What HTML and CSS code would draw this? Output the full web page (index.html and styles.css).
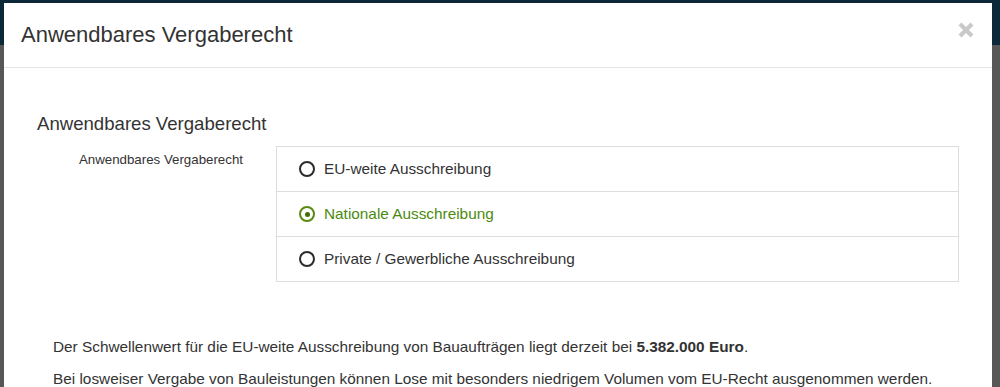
FILE: index.html
```html
<!DOCTYPE html>
<html lang="de">
<head>
<meta charset="utf-8">
<title>Anwendbares Vergaberecht</title>
<link rel="stylesheet" href="styles.css">
</head>
<body>
<div class="modal">
  <div class="modal-header">
    <h4 class="modal-title">Anwendbares Vergaberecht</h4>
    <button class="close" type="button" aria-label="Schließen">
      <svg width="16" height="16" viewBox="0 0 16 16"><path d="M2 2 L14 14 M14 2 L2 14" stroke="#c9c9c9" stroke-width="4.2" stroke-linecap="butt"/></svg>
    </button>
  </div>
  <div class="modal-body">
    <h3 class="section-title">Anwendbares Vergaberecht</h3>
    <div class="form-row">
      <label class="control-label">Anwendbares Vergaberecht</label>
      <ul class="radio-list">
        <li class="radio-item"><span class="radio"></span><span>EU-weite Ausschreibung</span></li>
        <li class="radio-item checked"><span class="radio"></span><span>Nationale Ausschreibung</span></li>
        <li class="radio-item"><span class="radio"></span><span>Private / Gewerbliche Ausschreibung</span></li>
      </ul>
    </div>
    <div class="info">
      <p>Der Schwellenwert für die EU-weite Ausschreibung von Bauaufträgen liegt derzeit bei <strong>5.382.000 Euro</strong>.</p>
      <p>Bei losweiser Vergabe von Bauleistungen können Lose mit besonders niedrigem Volumen vom EU-Recht ausgenommen werden.</p>
    </div>
  </div>
</div>
</body>
</html>
```

FILE: styles.css
```css
html, body {
  margin: 0;
  padding: 0;
  height: 387px;
  overflow: hidden;
}
body {
  background: linear-gradient(to bottom, #0c2737 0, #0c2737 45px, #575757 45px, #575757 100%);
  font-family: "Liberation Sans", Arial, sans-serif;
  color: #333;
}
.modal {
  margin: 3px 8px 0 4px;
  background: #fff;
  height: 400px;
}
.modal-header {
  display: flex;
  justify-content: space-between;
  align-items: center;
  padding: 18px 18px 18px 17px;
  border-bottom: 1px solid #e5e5e5;
}
.modal-title {
  margin: 0;
  font-size: 22px;
  font-weight: normal;
  line-height: 28px;
  color: #333;
}
.close {
  border: 0;
  background: none;
  padding: 0;
  margin-top: -10px;
  width: 16px;
  height: 16px;
  display: flex;
}
.modal-body {
  padding: 0 33px;
}
.section-title {
  margin: 44px 0 10px;
  font-size: 18.6px;
  font-weight: normal;
  line-height: 24px;
  color: #333;
}
.form-row {
  display: flex;
}
.control-label {
  width: 239px;
  box-sizing: border-box;
  padding: 5px 33px 0 0;
  text-align: right;
  font-size: 13.3px;
  line-height: 18px;
  color: #333;
}
.radio-list {
  flex: 1;
  list-style: none;
  margin: 0;
  padding: 0;
  border: 1px solid #ddd;
}
.radio-item {
  display: flex;
  align-items: center;
  gap: 9px;
  height: 44px;
  padding-left: 22px;
  font-size: 15.35px;
  color: #333;
}
.radio-item + .radio-item {
  border-top: 1px solid #ddd;
}
.radio {
  width: 16px;
  height: 16px;
  box-sizing: border-box;
  border: 2.5px solid #2b2b2b;
  border-radius: 50%;
  display: flex;
  align-items: center;
  justify-content: center;
  flex: none;
}
.checked {
  color: #4b8a0e;
}
.checked .radio {
  border-color: #5a8a12;
}
.checked .radio::after {
  content: "";
  width: 5px;
  height: 5px;
  border-radius: 50%;
  background: #3f6f0a;
}
.info {
  padding: 55px 0 0 16px;
}
.info p {
  margin: 0 0 12px;
  font-size: 15.35px;
  line-height: 20px;
  color: #333;
}
.info strong {
  font-weight: bold;
}
```
